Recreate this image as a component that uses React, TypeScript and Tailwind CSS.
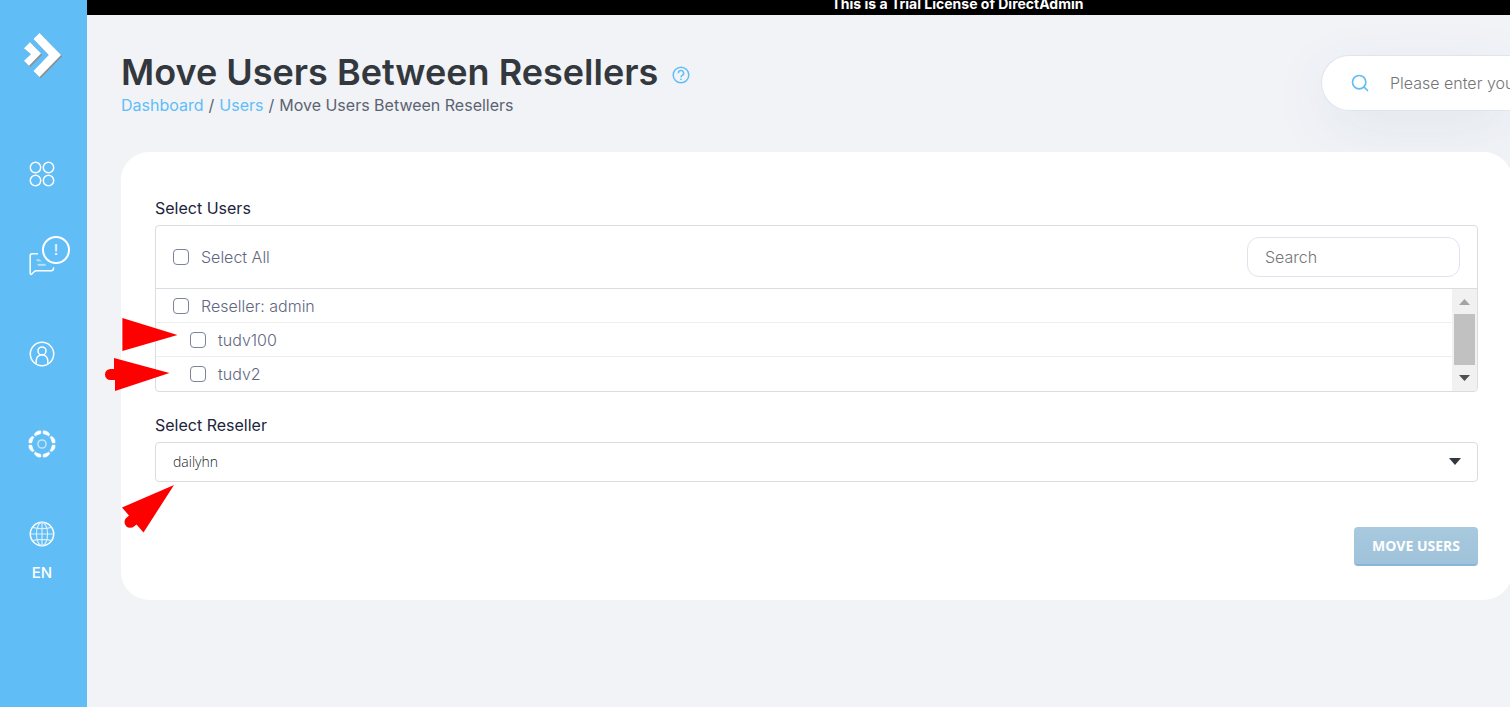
import type { ReactNode } from "react";
import { Search } from "lucide-react";

const LOBE = "M1.1-13C3.2-13.5 6.4-12.6 7.8-9.2L6.5-7.9C5.6-9.3 3.6-9.2 1.1-10.4Z";

function Logo() {
  return (
    <svg viewBox="0 0 40 48" className="h-12 w-10" aria-hidden="true">
      <g fill="#8f8f8f" transform="translate(1.2 1.2)">
        <path d="M17.5 2 39 24 17.5 46l-6-6L26.8 24 11.5 8z" />
        <path d="M8 11.3 19 22.5 7 34.7l-5-5 7-6.4-7-6z" />
      </g>
      <g fill="#fff">
        <path d="M17.5 2 39 24 17.5 46l-6-6L26.8 24 11.5 8z" />
        <path d="M8 11.3 19 22.5 7 34.7l-5-5 7-6.4-7-6z" />
      </g>
    </svg>
  );
}

function GridIcon() {
  return (
    <svg viewBox="0 0 26 26" className="size-[26px]" fill="none" stroke="#fff" strokeWidth="1.5" aria-hidden="true">
      <circle cx="6.5" cy="6.5" r="5.2" />
      <circle cx="19.5" cy="6.5" r="5.2" />
      <circle cx="6.5" cy="19.5" r="5.2" />
      <circle cx="19.5" cy="19.5" r="5.2" />
    </svg>
  );
}

function ChatIcon() {
  return (
    <svg viewBox="0 0 26 26" className="size-[26px]" fill="none" stroke="#fff" strokeWidth="1.5" strokeLinecap="round" aria-hidden="true">
      <path d="M8.4 2.7H3.2Q1.2 2.7 1.2 4.7V22Q1.2 24.3 3 22.8L5.6 20.3Q6.2 19.8 7.2 19.8H22.4Q24.4 19.8 24.6 16.9" />
      <path d="M7.8 8.8h2.6M8.2 9.8h3.6M9 13.4h7.2M9.4 14.2h7" stroke="#c5e5fc" strokeWidth="1" />
    </svg>
  );
}

function UserIcon() {
  return (
    <svg viewBox="0 0 26 26" className="size-[26px]" fill="none" stroke="#fff" strokeWidth="1.5" aria-hidden="true">
      <circle cx="13" cy="13" r="11.7" />
      <circle cx="13" cy="9.9" r="4" />
      <path d="M7.2 22.8V19.6a5.8 5.8 0 0 1 11.6 0v3.2" />
    </svg>
  );
}

function GearIcon() {
  return (
    <svg viewBox="-14 -14 28 28" className="size-7" fill="#fff" stroke="#fff" strokeWidth="0.5" aria-hidden="true">
      <path d={LOBE} />
      <path d={LOBE} transform="scale(-1 1)" />
      <path d={LOBE} transform="rotate(90)" />
      <path d={LOBE} transform="rotate(90) scale(-1 1)" />
      <path d={LOBE} transform="rotate(180)" />
      <path d={LOBE} transform="rotate(180) scale(-1 1)" />
      <path d={LOBE} transform="rotate(270)" />
      <path d={LOBE} transform="rotate(270) scale(-1 1)" />
      <circle r="4.1" fill="none" stroke="#c5e5fc" strokeWidth="1.5" />
    </svg>
  );
}

function GlobeIcon() {
  return (
    <svg viewBox="0 0 26 26" className="size-[26px]" fill="none" stroke="#fff" strokeWidth="1.5" aria-hidden="true">
      <circle cx="13" cy="13" r="11.7" />
      <g stroke="#d8eefd" strokeWidth="1.2">
        <ellipse cx="13" cy="13" rx="5.6" ry="11.7" />
        <path d="M13 1.3v23.4M1.3 13h23.4M3.6 6.4Q13 8.8 22.4 6.4M3.6 19.6Q13 17.2 22.4 19.6" />
      </g>
    </svg>
  );
}

function NavButton({ label, children }: { label: string; children: ReactNode }) {
  return (
    <button type="button" aria-label={label} className="relative flex size-10 items-center justify-center">
      {children}
    </button>
  );
}

function Check({ id, label, className }: { id: string; label: string; className: string }) {
  return (
    <div className={`flex items-center gap-3 ${className}`}>
      <input
        id={id}
        type="checkbox"
        className="size-4 shrink-0 appearance-none rounded-[4px] border border-[#7c839b] bg-white checked:bg-[#61bdf6]"
      />
      <label htmlFor={id} className="text-[16px] leading-5 font-light text-[#5f6782]">
        {label}
      </label>
    </div>
  );
}

function Scrollbar() {
  return (
    <div className="flex w-[25px] shrink-0 flex-col items-center bg-[#f1f1f1]" aria-hidden="true">
      <svg viewBox="0 0 11 25" className="h-[25px] w-[11px]">
        <path d="M0 16 5.5 10 11 16z" fill="#a3a3a3" />
      </svg>
      <div className="h-[51px] w-[21px] bg-[#c1c1c1]" />
      <svg viewBox="0 0 11 26" className="h-[26px] w-[11px]">
        <path d="M0 10 5.5 16 11 10z" fill="#505050" />
      </svg>
    </div>
  );
}

function Arrows() {
  return (
    <svg
      viewBox="0 0 80 220"
      className="pointer-events-none absolute top-[315px] left-[100px] h-[220px] w-20"
      fill="#f00"
      aria-hidden="true"
    >
      <path d="M22.4 3 77.5 20 22.4 36z" />
      <path d="M14 43 69.5 58 15 76V65H10.5a5.5 5.5 0 0 1 0-11H14z" />
      <path d="M74 170 43.5 217.5 36.5 209.5 34.3 211.2A5.6 5.6 0 1 1 26.2 203L29 200.5 22 192.5z" />
    </svg>
  );
}

export default function App() {
  return (
    <div className="relative flex min-h-screen overflow-hidden bg-[#f1f3f7] font-['Inter','Liberation_Sans',sans-serif]">
      <aside className="flex w-[87px] shrink-0 flex-col items-center bg-[#61bdf6] pt-[31px] pr-[3px]">
        <a href="#home" aria-label="Home">
          <Logo />
        </a>
        <nav className="mt-[75px] flex flex-col items-center gap-[50px]" aria-label="Main">
          <NavButton label="Menu">
            <GridIcon />
          </NavButton>
          <NavButton label="Messages">
            <ChatIcon />
            <span className="absolute -top-2 left-5 flex size-7 items-center justify-center rounded-full border-2 border-white bg-[#61bdf6] text-[15px] text-white">
              !
            </span>
          </NavButton>
          <NavButton label="Account">
            <UserIcon />
          </NavButton>
          <NavButton label="Settings">
            <GearIcon />
          </NavButton>
          <NavButton label="Language">
            <GlobeIcon />
          </NavButton>
        </nav>
        <span className="mt-[9px] text-[15px] leading-5 font-medium text-white">EN</span>
      </aside>

      <div className="min-w-0 flex-1">
        <div className="flex h-[15px] items-end justify-center overflow-hidden bg-black pl-[318px]">
          <p className="pb-px text-[14px] leading-5 font-bold whitespace-nowrap text-white">
            This is a Trial License of DirectAdmin
          </p>
        </div>

        <header className="flex items-start justify-between pt-[34px] pl-[34px]">
          <div>
            <div className="flex items-center gap-[14px]">
              <h1 className="text-[36px] leading-[46px] font-semibold text-[#33383e]">Move Users Between Resellers</h1>
              <a href="#help" aria-label="Help" className="pt-[6px]">
                <svg viewBox="0 0 18 18" className="size-[18px]" fill="none" stroke="#61bdf6" strokeWidth="1.5" aria-hidden="true">
                  <circle cx="9" cy="9" r="7.8" />
                  <path d="M6.4 7.2a2.6 2.6 0 1 1 3.9 2.2Q9 10.1 9 11.2" />
                  <path d="M9 12.4v1.6" />
                </svg>
              </a>
            </div>
            <nav className="flex gap-[5px] text-[16px] leading-5 text-[#5c6370]" aria-label="Breadcrumb">
              <a href="#dashboard" className="text-[#61bdf6]">
                Dashboard
              </a>
              <span>/</span>
              <a href="#users" className="text-[#61bdf6]">
                Users
              </a>
              <span>/</span>
              <span>Move Users Between Resellers</span>
            </nav>
          </div>
          <form className="mt-1.5 flex h-14 w-[189px] items-center gap-5 rounded-l-full border border-r-0 border-[#dfe5ee] bg-white pl-7 shadow-[0_16px_60px_rgba(70,90,120,0.08)]">
            <Search className="size-5 shrink-0 text-[#61bdf6]" strokeWidth={2} aria-hidden="true" />
            <input
              type="text"
              aria-label="Search"
              placeholder="Please enter your search"
              className="min-w-0 flex-1 bg-transparent text-[16px] leading-5 font-light outline-none placeholder:text-[#757575]"
            />
          </form>
        </header>

        <main className="relative -mr-0.5 mt-[37px] ml-[34px] rounded-[28px] bg-white px-[34px] pt-[46px] pb-[34px]">
          <section>
            <h2 className="text-[16px] leading-5 text-[#20243c]">Select Users</h2>
            <div className="mt-[7px] overflow-hidden rounded-[4px] border border-[#dcdcdf]">
              <div className="flex h-[63px] items-center justify-between border-b border-[#dcdcdf] px-[17px]">
                <Check id="select-all" label="Select All" className="" />
                <input
                  type="text"
                  aria-label="Search users"
                  placeholder="Search"
                  className="h-10 w-[213px] rounded-[12px] border border-[#dfe3ec] bg-white px-[17px] text-[16px] font-light outline-none placeholder:text-[#757575]"
                />
              </div>
              <div className="flex">
                <div className="min-w-0 flex-1">
                  <Check id="reseller-admin" label="Reseller: admin" className="h-[34px] border-b border-[#eeeeef] pl-[17px]" />
                  <Check id="tudv100" label="tudv100" className="h-[34px] border-b border-[#eeeeef] pl-[34px]" />
                  <Check id="tudv2" label="tudv2" className="h-[34px] pl-[34px]" />
                </div>
                <Scrollbar />
              </div>
            </div>
          </section>

          <section className="mt-[23px]">
            <label htmlFor="reseller" className="block text-[16px] leading-5 text-[#20243c]">
              Select Reseller
            </label>
            <div className="relative mt-[7px]">
              <select
                id="reseller"
                className="block h-10 w-full appearance-none rounded-[4px] border border-[#dcdcdf] bg-white px-[17px] pb-0.5 font-['Open_Sans','Noto_Sans',sans-serif] text-[14px] font-light text-[#202328]"
              >
                <option>dailyhn</option>
              </select>
              <svg viewBox="0 0 12 7" className="pointer-events-none absolute top-4 right-[17px] h-[7px] w-3" aria-hidden="true">
                <path d="M0 0h12L6 7z" fill="#33383e" />
              </svg>
            </div>
          </section>

          <div className="mt-[45px] flex justify-end">
            <button
              type="button"
              className="h-[39px] rounded-[4px] border-b-2 border-[#8bb6d3] bg-linear-to-b from-[#a8c9de] to-[#9fc3da] px-[18px] font-['Open_Sans','Noto_Sans',sans-serif] text-[14px] leading-5 font-bold text-white"
            >
              MOVE USERS
            </button>
          </div>
        </main>
      </div>

      <Arrows />
    </div>
  );
}
